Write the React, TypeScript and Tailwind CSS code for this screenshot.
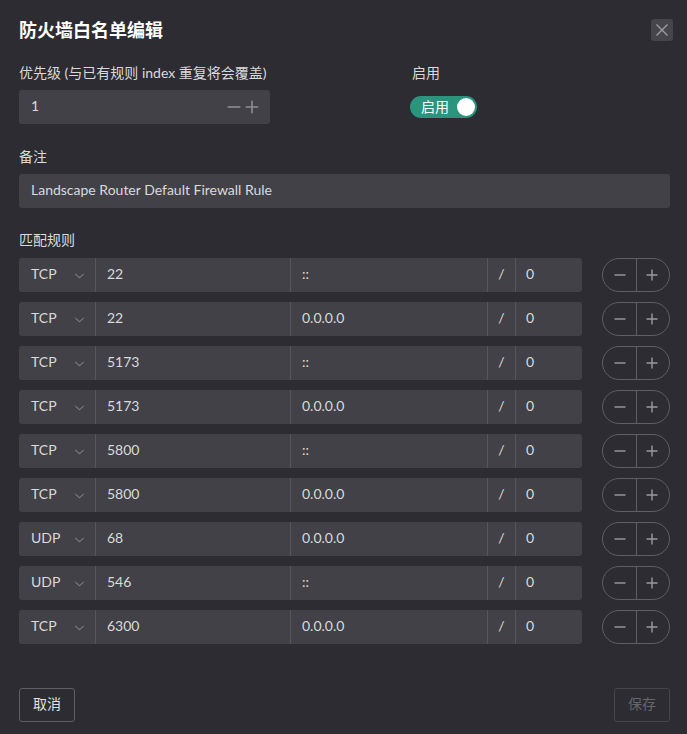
import { useState } from "react";

const rules = [
  { proto: "TCP", port: "22", ip: "::", mask: "0" },
  { proto: "TCP", port: "22", ip: "0.0.0.0", mask: "0" },
  { proto: "TCP", port: "5173", ip: "::", mask: "0" },
  { proto: "TCP", port: "5173", ip: "0.0.0.0", mask: "0" },
  { proto: "TCP", port: "5800", ip: "::", mask: "0" },
  { proto: "TCP", port: "5800", ip: "0.0.0.0", mask: "0" },
  { proto: "UDP", port: "68", ip: "0.0.0.0", mask: "0" },
  { proto: "UDP", port: "546", ip: "::", mask: "0" },
  { proto: "TCP", port: "6300", ip: "0.0.0.0", mask: "0" },
];

const font = { fontFamily: '"Lato", "Noto Sans CJK SC", sans-serif' };

function Minus({ size = 14 }: { size?: number }) {
  return (
    <svg width={size} height={size} viewBox="0 0 14 14" fill="none">
      <path d="M1.5 7h11" stroke="currentColor" strokeWidth="1.4" />
    </svg>
  );
}

function Plus({ size = 14 }: { size?: number }) {
  return (
    <svg width={size} height={size} viewBox="0 0 14 14" fill="none">
      <path d="M1.5 7h11M7 1.5v11" stroke="currentColor" strokeWidth="1.4" />
    </svg>
  );
}

function RuleRow({ rule }: { rule: (typeof rules)[number] }) {
  return (
    <div className="flex items-center h-[34px]">
      <div className="flex h-full w-[563px] bg-[#414147] rounded-[3px] text-[14px] text-[#dadadb]">
        <div className="flex items-center justify-between w-[76px] pl-[12px] pr-[9px]">
          <span className="pb-[3px]">{rule.proto}</span>
          <svg width="13" height="13" viewBox="0 0 12 12" fill="none" className="text-[#77777c]">
            <path d="M2 4.5l4 3.5 4-3.5" stroke="currentColor" strokeWidth="1" />
          </svg>
        </div>
        <div className="flex items-center pb-[3px] w-[195px] pl-[11px] border-l border-[#56565b]">{rule.port}</div>
        <div className="flex items-center pb-[3px] w-[197px] pl-[11px] border-l border-[#56565b]">{rule.ip}</div>
        <div className="flex items-center pb-[3px] justify-center w-[28px] border-l border-[#56565b]">/</div>
        <div className="flex items-center pb-[3px] flex-1 pl-[10px] border-l border-[#56565b]">{rule.mask}</div>
      </div>
      <div className="ml-[20px] flex h-full w-[68px] rounded-full border border-[#5e5e63] text-[#9a9a9e]">
        <div className="flex flex-1 items-center justify-center pl-[2px]">
          <Minus />
        </div>
        <div className="w-px bg-[#5e5e63]" />
        <div className="flex flex-1 items-center justify-center pr-[2px]">
          <Plus />
        </div>
      </div>
    </div>
  );
}

export default function App() {
  const [enabled, setEnabled] = useState(true);

  return (
    <div className="w-[687px] h-[734px] bg-[#2c2c32] text-[#dadadb] flex flex-col" style={font}>
      <div className="flex items-start justify-between pl-[19px] pr-[14px] pt-[17px]">
        <h1 className="text-[18px] leading-[26px] font-bold text-white">防火墙白名单编辑</h1>
        <button className="mt-[2px] w-[22px] h-[22px] rounded-[3px] bg-[#45454b] flex items-center justify-center text-[#9c9ca0]">
          <svg width="14" height="14" viewBox="0 0 14 14" fill="none">
            <path d="M1.5 1.5l11 11M12.5 1.5l-11 11" stroke="currentColor" strokeWidth="1.4" />
          </svg>
        </button>
      </div>

      <div className="pl-[19px] pr-[17px] mt-[20px] flex">
        <div className="w-[391px]">
          <div className="text-[14px] leading-[20px] mb-[7px]">优先级 (与已有规则 index 重复将会覆盖)</div>
          <div className="w-[251px] h-[34px] bg-[#414147] rounded-[3px] flex items-center justify-between pl-[12px] pr-[10px] text-[14px]">
            <span className="pb-[3px]">1</span>
            <div className="flex items-center gap-[2px] text-[#8e8e92]">
              <Minus size={16} />
              <Plus size={16} />
            </div>
          </div>
        </div>
        <div>
          <div className="text-[14px] leading-[20px] mb-[7px] ml-[2px]">启用</div>
          <div className="h-[34px] flex items-center">
            <button
              onClick={() => setEnabled(!enabled)}
              className="w-[67px] h-[22px] rounded-full bg-[#2a947d] flex items-center justify-between pl-[11px] pr-[2px] text-[14px] text-white"
            >
              <span className="leading-[22px]">启用</span>
              <span className="w-[18px] h-[18px] rounded-full bg-white" />
            </button>
          </div>
        </div>
      </div>

      <div className="pl-[19px] pr-[17px] mt-[23px]">
        <div className="text-[14px] leading-[20px] mb-[7px]">备注</div>
        <div className="h-[34px] bg-[#414147] rounded-[3px] flex items-center pl-[12px] pb-[3px] text-[14px]">
          Landscape Router Default Firewall Rule
        </div>
      </div>

      <div className="pl-[19px] pr-[17px] mt-[22px]">
        <div className="text-[14px] leading-[20px] mb-[8px]">匹配规则</div>
        <div className="flex flex-col gap-[10px]">
          {rules.map((r, i) => (
            <RuleRow key={i} rule={r} />
          ))}
        </div>
      </div>

      <div className="pl-[19px] pr-[17px] mt-[44px] flex justify-between">
        <button className="h-[34px] w-[56px] pb-[3px] rounded-[3px] border border-[#5e5e63] text-[14px] text-[#e0e0e1]">取消</button>
        <button disabled className="h-[34px] w-[56px] pb-[3px] rounded-[3px] border border-[#45454a] text-[14px] text-[#67676b]">保存</button>
      </div>
    </div>
  );
}
